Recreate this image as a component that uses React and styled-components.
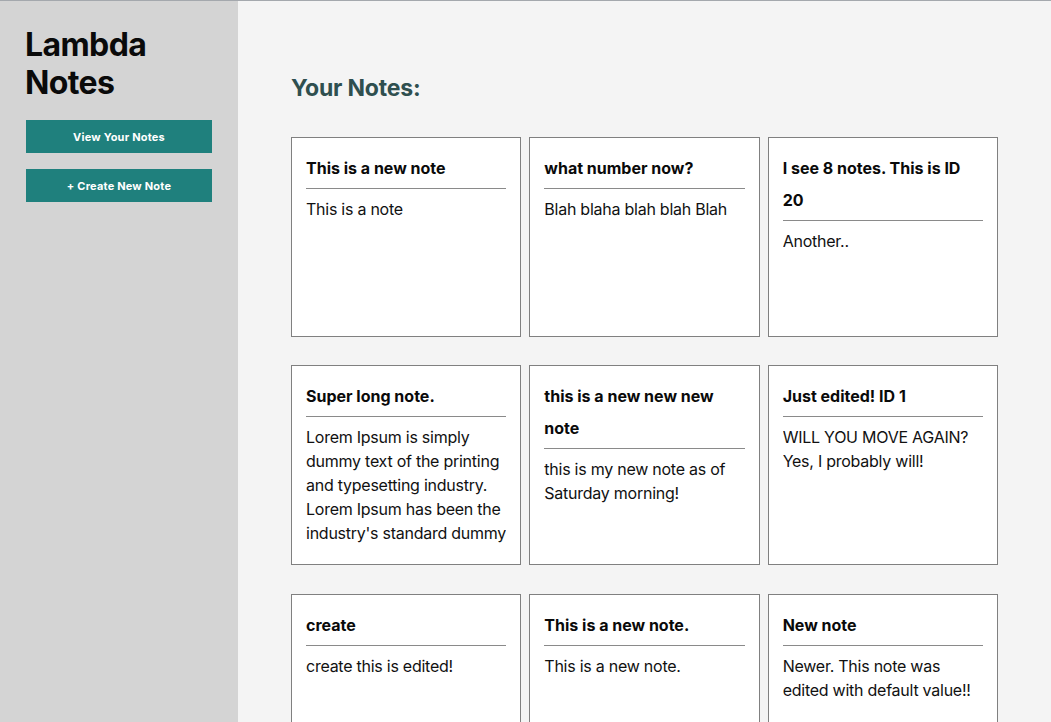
import React from "react";
import styled, { createGlobalStyle } from "styled-components";

const notes = [
  { id: 1, title: "This is a new note", body: "This is a note" },
  { id: 2, title: "what number now?", body: "Blah blaha blah blah Blah" },
  { id: 3, title: "I see 8 notes. This is ID 20", body: "Another.." },
  {
    id: 4,
    title: "Super long note.",
    body:
      "Lorem Ipsum is simply dummy text of the printing and typesetting industry. Lorem Ipsum has been the industry's standard dummy text ever since the 1500s, when an unknown printer took a galley of type and scrambled it to make a type specimen book.",
  },
  {
    id: 5,
    title: "this is a new new new note",
    body: "this is my new note as of Saturday morning!",
  },
  {
    id: 6,
    title: "Just edited! ID 1",
    body: "WILL YOU MOVE AGAIN? Yes, I probably will!",
  },
  { id: 7, title: "create", body: "create this is edited!" },
  { id: 8, title: "This is a new note.", body: "This is a new note." },
  {
    id: 9,
    title: "New note",
    body: "Newer. This note was edited with default value!!",
  },
];

const GlobalStyle = createGlobalStyle`
  html, body {
    margin: 0;
    padding: 0;
    font-family: Inter, "Liberation Sans", sans-serif;
    color: #111;
  }
  * {
    box-sizing: border-box;
  }
`;

const App = () => {
  return (
    <>
      <GlobalStyle />
      <Layout>
        <Sidebar>
          <Brand>Lambda Notes</Brand>
          <NavButton>View Your Notes</NavButton>
          <NavButton>+ Create New Note</NavButton>
        </Sidebar>
        <Main>
          <Heading>Your Notes:</Heading>
          <NotesGrid>
            {notes.map((note) => (
              <NoteCard key={note.id}>
                <NoteTitle>{note.title}</NoteTitle>
                <NoteBody>{note.body}</NoteBody>
              </NoteCard>
            ))}
          </NotesGrid>
        </Main>
      </Layout>
    </>
  );
};

const Layout = styled.div`
  display: flex;
  height: 100vh;
  overflow: hidden;
  border-top: 1px solid #a4a8ad;
`;

const Sidebar = styled.aside`
  width: 238px;
  flex-shrink: 0;
  background: #d4d4d4;
  padding: 25px 26px;
  display: flex;
  flex-direction: column;
  align-items: flex-start;
`;

const Brand = styled.h1`
  margin: 0 0 18px -1px;
  font-size: 32px;
  line-height: 38px;
  font-weight: 700;
  letter-spacing: -0.6px;
  color: #0a0a0a;
  width: 150px;
`;

const NavButton = styled.button`
  width: 186px;
  height: 33px;
  margin-bottom: 16px;
  background: #1f807d;
  color: #fff;
  border: none;
  border-radius: 0;
  font-family: Inter, "Liberation Sans", sans-serif;
  font-size: 11px;
  font-weight: 700;
  letter-spacing: 0.2px;
  cursor: pointer;
`;

const Main = styled.main`
  flex: 1;
  background: #f4f4f4;
  padding: 72px 53px 0;
`;

const Heading = styled.h2`
  margin: 0 0 34px;
  font-size: 23px;
  line-height: 30px;
  font-weight: 700;
  letter-spacing: -0.2px;
  color: #2f4f4f;
`;

const NotesGrid = styled.div`
  width: 707px;
  display: grid;
  grid-template-columns: repeat(3, 1fr);
  column-gap: 8px;
  row-gap: 28.4px;
`;

const NoteCard = styled.div`
  height: 200px;
  background: #fff;
  border: 1px solid #808080;
  padding: 14px 14px 0;
  overflow: hidden;
`;

const NoteTitle = styled.h3`
  margin: 0;
  padding-bottom: 4px;
  border-bottom: 1px solid #8a8a8a;
  font-size: 16px;
  line-height: 32px;
  font-weight: 700;
  color: #0a0a0a;
`;

const NoteBody = styled.p`
  margin: 8px 0 0;
  font-size: 16px;
  line-height: 24px;
  letter-spacing: -0.25px;
  color: #111;
  max-height: 120px;
  overflow: hidden;
`;

export default App;
